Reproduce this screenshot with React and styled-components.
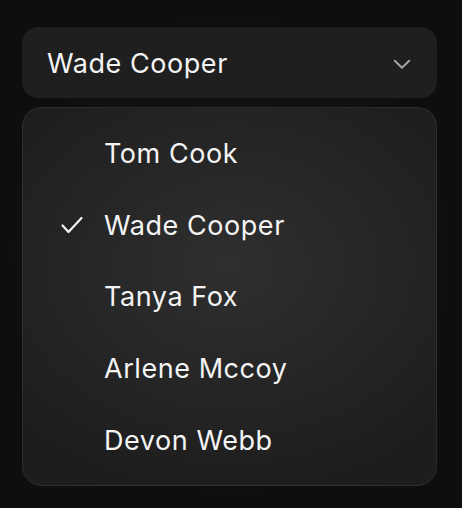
import React, { useState } from "react";
import styled, { createGlobalStyle } from "styled-components";

const Global = createGlobalStyle`
  html, body { margin: 0; padding: 0; background: #0e0e0e; }
  body { font-family: Inter, "Noto Sans", sans-serif; -webkit-font-smoothing: antialiased; }
`;

const Page = styled.div`
  width: 462px;
  height: 508px;
  box-sizing: border-box;
  padding: 27px 25px 0 22px;
  background: radial-gradient(ellipse at 50% 50%, #161616 0%, #0e0e0e 70%);
  display: flex;
  flex-direction: column;
  gap: 9px;
`;

const Button = styled.button`
  all: unset;
  box-sizing: border-box;
  height: 71px;
  border-radius: 16px;
  background: #1f1f1f;
  display: flex;
  align-items: center;
  justify-content: space-between;
  padding: 1px 26px 0 25px;
  color: #f4f4f4;
  font-size: 27px;
  font-family: Inter, sans-serif;
  letter-spacing: 0.55px;
`;

const Chevron = styled.svg`
  margin-top: 2px;
`;

const Panel = styled.ul`
  list-style: none;
  margin: 0;
  box-sizing: border-box;
  height: 379px;
  border-radius: 20px;
  border: 1px solid rgba(255, 255, 255, 0.07);
  background: radial-gradient(ellipse 70% 60% at 50% 42%, #2f2f2f 0%, #262626 50%, #1d1d1d 100%);
  padding: 9px 0;
  display: flex;
  flex-direction: column;
`;

const Option = styled.li`
  height: 72px;
  display: flex;
  align-items: center;
  color: #f4f4f4;
  font-size: 27px;
  letter-spacing: 0.55px;
  position: relative;
  padding-left: 81px;
  padding-top: 1px;
`;

const Check = styled.svg`
  position: absolute;
  left: 37px;
  top: 50%;
  transform: translateY(-50%);
`;

const names = ["Tom Cook", "Wade Cooper", "Tanya Fox", "Arlene Mccoy", "Devon Webb"];

export default function App() {
  const [selected] = useState("Wade Cooper");
  return (
    <>
      <Global />
      <Page>
        <Button>
          {selected}
          <Chevron width="18" height="11" viewBox="0 0 18 11" fill="none">
            <path d="M1.8 1.8L9 8.8l7.2-7" stroke="#a3a3a3" strokeWidth="2" strokeLinecap="round" strokeLinejoin="round" />
          </Chevron>
        </Button>
        <Panel>
          {names.map((n) => (
            <Option key={n}>
              {n === selected && (
                <Check width="24" height="24" viewBox="0 0 24 24" fill="none">
                  <path d="M2.5 12.5l6 6.5L21.5 5" stroke="#f4f4f4" strokeWidth="2.2" strokeLinecap="round" strokeLinejoin="round" />
                </Check>
              )}
              {n}
            </Option>
          ))}
        </Panel>
      </Page>
    </>
  );
}
